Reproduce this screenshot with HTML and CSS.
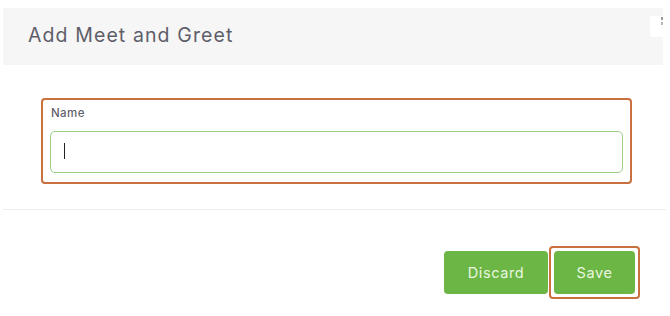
FILE: index.html
```html
<!DOCTYPE html>
<html lang="en">
<head>
    <meta charset="UTF-8">
    <meta name="viewport" content="width=device-width, initial-scale=1.0">
    <title>Add Meet and Greet</title>
    <link rel="stylesheet" href="styles.css">
</head>
<body>
    <div class="modal">
        <div class="modal-header">
            <h2 class="modal-title">Add Meet and Greet</h2>
            <div class="corner">
                <svg width="4" height="10" viewBox="0 0 4 10">
                    <rect x="1" y="1" width="2" height="3" fill="#9a9a9a"/>
                    <rect x="1" y="6" width="2" height="3" fill="#b5b5b5"/>
                </svg>
            </div>
        </div>

        <div class="modal-body">
            <div class="field">
                <label for="name">Name</label>
                <div class="input-box">
                    <input type="text" id="name">
                    <span class="caret"></span>
                </div>
            </div>
        </div>

        <div class="modal-footer">
            <button class="btn">Discard</button>
            <div class="focus-ring">
                <button class="btn btn-save">Save</button>
            </div>
        </div>
    </div>
</body>
</html>
```

FILE: styles.css
```css
body {
    margin: 0;
    background-color: white;
    font-family: Inter, 'Open Sans', sans-serif;
}
.modal {
    width: 670px;
    position: relative;
}
.modal-header {
    margin: 8px 7px 0 3px;
    height: 57px;
    box-sizing: border-box;
    background-color: #f6f6f6;
    display: flex;
    align-items: center;
    padding: 0 0 3px 25px;
}
.modal-title {
    margin: 0;
    font-size: 19.5px;
    font-weight: 400;
    letter-spacing: 1.1px;
    color: #5e5e6a;
}
.corner {
    position: absolute;
    top: 8px;
    right: 2px;
    width: 18px;
    height: 21px;
    background-color: white;
    border-radius: 0 0 0 3px;
}
.corner svg {
    position: absolute;
    top: 0;
    right: 4px;
}
.modal-body {
    padding: 33px 34px 25px 38px;
    border-bottom: 1px solid #ececec;
    margin: 0 4px 0 3px;
}
.field {
    border: 2px solid #c9703f;
    border-radius: 4px;
    padding: 6px 7px 9px 7px;
}
label {
    display: block;
    font-size: 11.5px;
    font-weight: 500;
    letter-spacing: 0.4px;
    color: #5f5f6b;
    line-height: 14px;
    margin: 0 0 11px 1px;
}
.input-box {
    position: relative;
    height: 42px;
    border: 1px solid #9ccf84;
    border-radius: 5px;
    box-sizing: border-box;
}
.input-box input {
    width: 100%;
    height: 100%;
    border: none;
    outline: none;
    background: transparent;
    box-sizing: border-box;
}
.caret {
    position: absolute;
    left: 13px;
    top: 11px;
    width: 1px;
    height: 16px;
    background-color: #222;
}
.modal-footer {
    display: flex;
    justify-content: flex-end;
    align-items: center;
    padding: 36px 30px 0 0;
}
.btn {
    height: 43px;
    border: none;
    border-radius: 4px;
    background-color: #6cb645;
    color: #eaf6e0;
    font-family: inherit;
    font-size: 14.5px;
    font-weight: 400;
    letter-spacing: 0.6px;
    padding: 0;
    width: 104px;
}
.focus-ring {
    margin-left: 1px;
    border: 2px solid #c9703f;
    border-radius: 4px;
    padding: 3px;
    display: flex;
}
.btn-save {
    width: 81px;
}
```
